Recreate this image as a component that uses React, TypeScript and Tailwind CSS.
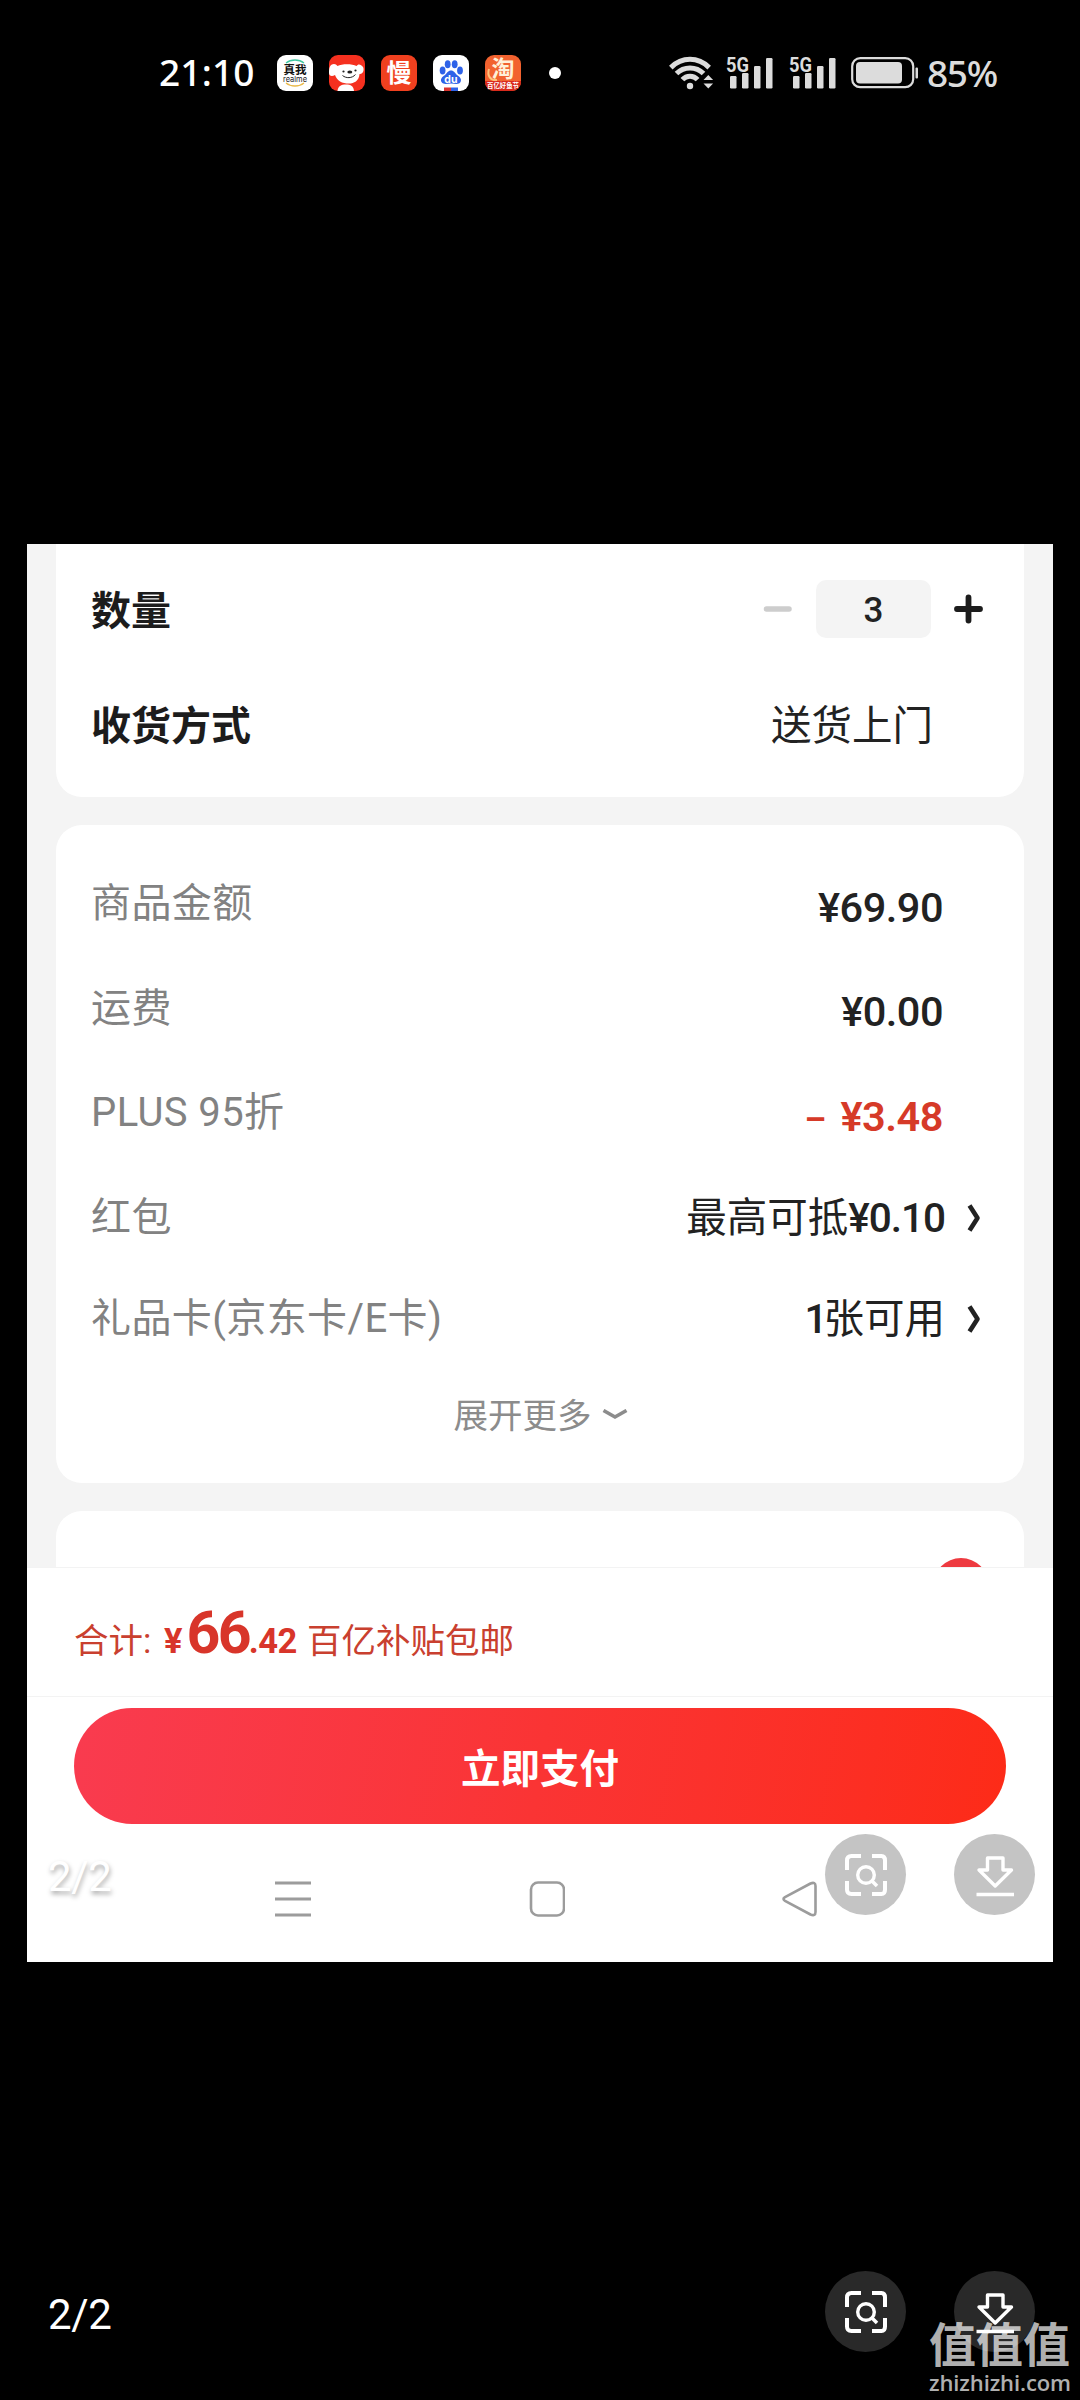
import React from "react";
import clsx from "clsx";

type PriceRow = {
  label: string;
  value: React.ReactNode;
  discount?: boolean;
  link?: boolean;
  short?: boolean;
};

const rows: PriceRow[] = [
  { label: "商品金额", value: "¥69.90" },
  { label: "运费", value: "¥0.00" },
  {
    label: "PLUS 95折",
    value: (
      <>
        <span className="mr-[15px] inline-block text-[34px] font-bold">–</span>¥3.48
      </>
    ),
    discount: true,
  },
  {
    label: "红包",
    value: (
      <>
        最高可抵<span className="font-medium tracking-[-1px]">¥0.10</span>
      </>
    ),
    link: true,
  },
  {
    label: "礼品卡(京东卡/E卡)",
    value: (
      <>
        <span className="font-medium tracking-[-4px]">1</span>张可用
      </>
    ),
    link: true,
    short: true,
  },
];

function SignalBars() {
  return (
    <svg className="overflow-visible" width="48" height="34" viewBox="0 0 48 34" fill="#dcdcdc">
      <text
        x="0"
        y="16"
        fontSize="20"
        fontWeight="700"
        textLength="23"
        lengthAdjust="spacingAndGlyphs"
        fontFamily="Roboto, sans-serif"
      >
        5G
      </text>
      <rect x="4" y="20" width="6.5" height="12.5" rx="1.2" />
      <rect x="16" y="17" width="6.5" height="15.5" rx="1.2" />
      <rect x="28" y="10" width="6.5" height="22.5" rx="1.2" />
      <rect x="40" y="2" width="6.5" height="30.5" rx="1.2" />
    </svg>
  );
}

function WifiIcon() {
  return (
    <svg
      width="46"
      height="36"
      viewBox="0 0 46 36"
      fill="none"
      stroke="#dcdcdc"
      strokeWidth="5"
    >
      <path d="M1.8 12.6C13 1.6 29 1.6 40.2 12.6" />
      <path d="M7.5 18.6C15 11 27 11 34.5 18.6" />
      <path d="M13.4 24.6C17.5 20 24.5 20 28.6 24.6" />
      <circle cx="21" cy="31" r="3.2" fill="#dcdcdc" stroke="none" />
      <path d="M34.5 25l4.8-5 4.8 5zM34.5 28.6l4.8 5 4.8-5z" fill="#dcdcdc" stroke="none" />
    </svg>
  );
}

function AppIcons() {
  return (
    <div className="flex gap-4">
      <svg className="overflow-visible" width="36" height="36" viewBox="0 0 36 36">
        <rect width="36" height="36" rx="9" fill="#fff" />
        <path d="M9 8C14 4 22 4 27 8" fill="none" stroke="#3fc7a0" strokeWidth="1.3" />
        <path d="M9 28C14 32 22 32 27 28" fill="none" stroke="#e9b949" strokeWidth="1.3" />
        <text x="6.5" y="19" fontSize="11.5" fontWeight="700" fill="#111" fontFamily="'Noto Sans CJK SC', sans-serif">
          真我
        </text>
        <text x="6" y="26.5" fontSize="8" fill="#222" textLength="24" lengthAdjust="spacingAndGlyphs" fontFamily="Inter, sans-serif">
          realme
        </text>
      </svg>

      <svg width="36" height="36" viewBox="0 0 36 36">
        <rect width="36" height="36" rx="9" fill="#f5301f" />
        <path
          d="M2 10C5 8 7 9 8.5 11C13 8.5 23 8.5 27.5 11C29 8.5 32 9 34 12C35.5 15 34 19.5 30.5 19C30 26 25 28.5 20 28.5C13 28.5 8 26 6 20C3 22 0 21 0 18C0 15 0 12 2 10Z"
          fill="#fff"
        />
        <path d="M8.5 36C9 31 12 29.5 17 29.5C22 29.5 24.5 31 25 36Z" fill="#fff" />
        <circle cx="14.5" cy="16.5" r="1.1" fill="#222" />
        <circle cx="26.5" cy="15.5" r="1.1" fill="#222" />
        <ellipse cx="20.8" cy="17" rx="2.5" ry="1.5" fill="#222" />
        <path d="M13.5 20.5C17 23.5 23 23.5 26.5 19.5" fill="none" stroke="#222" strokeWidth="1" />
      </svg>

      <svg className="overflow-visible" width="36" height="36" viewBox="0 0 36 36">
        <rect width="36" height="36" rx="9" fill="#f0401f" />
        <text x="5.5" y="27" fontSize="25" fontWeight="700" fill="#fff" fontFamily="'Noto Sans CJK SC', sans-serif">
          慢
        </text>
      </svg>

      <svg width="36" height="36" viewBox="0 0 36 36">
        <rect width="36" height="36" rx="9" fill="#fff" />
        <g fill="#2e62e8">
          <ellipse cx="9.6" cy="15.5" rx="2.9" ry="4" />
          <ellipse cx="14.7" cy="9.2" rx="2.9" ry="4" />
          <ellipse cx="21.7" cy="9.2" rx="2.9" ry="4" />
          <ellipse cx="27" cy="15.5" rx="2.9" ry="4" />
          <path d="M18 15.5C21 15.5 22 18 24 20C27 22 29 24 27.5 27C26 30 22 28.6 18 28.6C14 28.6 10.5 30 8.5 27C7 24 9 22 12 20C14 18 15 15.5 18 15.5Z" />
          <rect x="18" y="32.5" width="7" height="3.5" />
        </g>
        <rect x="11" y="32.5" width="7" height="3.5" fill="#d9332e" />
        <text x="11.3" y="27.5" fontSize="10.5" fontWeight="700" fill="#fff" fontFamily="Inter, sans-serif">
          du
        </text>
      </svg>

      <svg className="overflow-visible" width="36" height="36" viewBox="0 0 36 36">
        <rect width="36" height="36" rx="9" fill="#f2622f" />
        <path d="M0 26h36v1a9 9 0 0 1-9 9H9a9 9 0 0 1-9-9z" fill="#d92a1c" />
        <path d="M4 14C2 20 5 26 12 25" fill="none" stroke="#ffc27a" strokeWidth="2" />
        <text x="6.5" y="22" fontSize="23" fontWeight="700" fill="#fff0d8" fontFamily="'Noto Sans CJK SC', sans-serif">
          淘
        </text>
        <text
          x="2"
          y="33"
          fontSize="7"
          fontWeight="700"
          fill="#fff"
          textLength="32"
          lengthAdjust="spacingAndGlyphs"
          fontFamily="'Noto Sans CJK SC', sans-serif"
        >
          百亿好鱼节
        </text>
      </svg>
    </div>
  );
}

function StatusBar() {
  return (
    <header className="flex h-[146px] shrink-0 items-center pl-[159px] text-white">
      <span className="w-[118px] pb-[3px] font-['Noto_Sans',sans-serif] text-[37px] font-medium tracking-[0.2px]">
        21:10
      </span>
      <AppIcons />
      <span className="ml-7 size-3 rounded-full bg-white" />
      <div className="ml-[108px] flex items-center">
        <WifiIcon />
        <span className="ml-[11px] flex gap-[15px]">
          <SignalBars />
          <SignalBars />
        </span>
        <svg className="ml-[14px]" width="68" height="32" viewBox="0 0 68 32">
          <rect x="1.2" y="1.2" width="61" height="29" rx="8" fill="none" stroke="#dcdcdc" strokeWidth="2.2" />
          <rect x="5" y="5" width="46" height="21.5" rx="4" fill="#dcdcdc" />
          <rect x="64.5" y="10.5" width="2.5" height="11" rx="1" fill="#dcdcdc" />
        </svg>
        <span className="ml-[8px] pb-px font-['Noto_Sans',sans-serif] text-[37px] font-medium tracking-[-1.3px] text-[#dcdcdc]">
          85%
        </span>
      </div>
    </header>
  );
}

function Chevron() {
  return (
    <svg width="16" height="30" viewBox="0 0 16 30" fill="none" stroke="#222" strokeWidth="4.6" strokeLinejoin="round">
      <path d="M3.5 2.5L11.5 15L3.5 27.5" />
    </svg>
  );
}

function SummaryRow({ label, value, discount, link, short }: PriceRow) {
  return (
    <div className={clsx("flex items-center justify-between", short ? "h-[98px]" : "h-[104.5px]")}>
      <span className="text-[40px] tracking-[0.4px] text-[#828282]">{label}</span>
      {link ? (
        <span className="flex items-center pr-[6px] text-[40.5px] text-[#222]">
          <span>{value}</span>
          <span className="ml-[21px]">
            <Chevron />
          </span>
        </span>
      ) : (
        <span
          className={clsx(
            "pt-[6px] pr-[45px] text-[41.5px] tracking-[-0.5px]",
            discount ? "font-semibold text-[#d63a28]" : "font-medium text-[#222]"
          )}
        >
          {value}
        </span>
      )}
    </div>
  );
}

// circular scan + download actions of the photo viewer
function ViewerActions({ dark }: { dark?: boolean }) {
  const circle = clsx(
    "flex size-[81px] items-center justify-center rounded-full",
    dark ? "bg-[#292929]" : "bg-[#c4c4c4]"
  );
  return (
    <div className="flex gap-12">
      <span className={circle}>
        <svg width="44" height="44" viewBox="0 0 44 44" fill="none" stroke="#fff" strokeWidth="4">
          <path d="M3 17V7.5Q3 3 7.5 3H17M28 3h9.5Q41 3 41 7.5V17M41 28v8.5Q41 41 37.5 41H28M17 41H7.5Q3 41 3 36.5V28" />
          <circle cx="22" cy="22" r="8.3" strokeWidth="3.4" />
          <path d="M27.5 27.5L33 33" strokeWidth="3.6" />
        </svg>
      </span>
      <span className={circle}>
        <svg width="44" height="44" viewBox="0 0 44 44" fill="none" stroke="#fff" strokeWidth="3.4" strokeLinejoin="round">
          <path d="M14.5 5H30V17H38.5L22.2 33L6 17H14.5Z" />
          <path d="M3.5 41.5h37.5" />
        </svg>
      </span>
    </div>
  );
}

function OrderShot() {
  return (
    <main className="relative mx-[27px] flex h-[1418px] shrink-0 flex-col bg-[#f4f4f4]">
      <section className="mx-[29px] flex h-[253px] shrink-0 flex-col rounded-b-[26px] bg-white pr-9 pl-[35px] pt-[8px]">
        <div className="flex h-[114px] items-center">
          <span className="flex-1 pt-[5px] text-[40px] font-bold text-[#1c1c1c]">数量</span>
          <svg width="30" height="30" viewBox="0 0 30 30" stroke="#cdcdcd" strokeWidth="5.5" strokeLinecap="round">
            <path d="M3.5 15h22.5" />
          </svg>
          <span className="mr-[22px] ml-[23px] flex h-[58px] w-[115px] items-center justify-center rounded-[10px] bg-[#f4f4f4] pt-[2px] text-[35px] font-medium text-[#222]">
            3
          </span>
          <svg
            className="mr-[4px]"
            width="31"
            height="30"
            viewBox="0 0 31 30"
            stroke="#1c1c1c"
            strokeWidth="5.8"
            strokeLinecap="round"
          >
            <path d="M4 15h23M15.5 3.5v23" />
          </svg>
        </div>
        <div className="flex h-[116px] items-center justify-between pt-[5px] pr-[55px]">
          <span className="text-[40px] font-bold text-[#1c1c1c]">收货方式</span>
          <span className="text-[40.5px] text-[#222]">送货上门</span>
        </div>
      </section>

      <section className="mx-[29px] mt-[28px] h-[658px] shrink-0 rounded-[26px] bg-white pt-[27px] pr-9 pl-[35px]">
        {rows.map((row) => (
          <SummaryRow key={row.label} {...row} />
        ))}
        <div className="flex h-[96px] items-center justify-center gap-[10px] pl-[2px] text-[34.5px] text-[#8c8c8c]">
          展开更多
          <svg width="26" height="14" viewBox="0 0 26 14" fill="none" stroke="#8c8c8c" strokeWidth="3.6">
            <path d="M1.5 1.5L13 8L24.5 1.5" />
          </svg>
        </div>
      </section>

      <section className="mx-[29px] mt-[28px] flex h-[56px] shrink-0 justify-end overflow-hidden rounded-t-[26px] bg-white pt-[47px] pr-[35px]">
        <span className="size-[56px] shrink-0 rounded-full bg-[#ee3a40]" />
      </section>

      <div className="flex h-[130px] shrink-0 items-center border-y border-[#f3f3f3] bg-white pl-[47px]">
        <p className="flex items-baseline text-[34.5px] leading-none text-[#c9402f]">
          <span className="w-[90px]">合计:</span>
          <span className="font-bold text-[#d8352a]">¥</span>
          <span className="ml-[4px] text-[59px] font-bold tracking-[-2.7px] text-[#d8352a]">66</span>
          <span className="font-bold tracking-[-0.5px] text-[#d8352a]">.42</span>
          <span className="ml-[10px]">百亿补贴包邮</span>
        </p>
      </div>

      <div className="flex flex-1 flex-col bg-white px-[47px] pt-[11px]">
        <button className="h-[116px] shrink-0 rounded-full bg-linear-100 from-[#f93b4f] via-[#fa3434] to-[#fd2b17] pt-[7px] text-[39.5px] font-bold text-white">
          立即支付
        </button>
        <div className="flex h-[138px] items-center pt-[12px] text-[#9c9c9c]">
          <svg className="ml-[201px]" width="36" height="36" viewBox="0 0 36 36" stroke="currentColor" strokeWidth="3">
            <path d="M0 2h36M0 18h36M0 34h36" />
          </svg>
          <svg className="ml-[218px]" width="36" height="36" viewBox="0 0 36 36" fill="none" stroke="currentColor" strokeWidth="2.6">
            <rect x="2" y="1.5" width="33" height="33" rx="7" />
          </svg>
          <svg
            className="ml-[217px]"
            width="36"
            height="36"
            viewBox="0 0 36 36"
            fill="none"
            stroke="currentColor"
            strokeWidth="2.6"
            strokeLinejoin="round"
          >
            <path d="M3 16.2Q0 18 3 19.8L28.5 33.5Q33.5 35.5 33.5 31V5Q33.5 0.5 28.5 2.5Z" />
          </svg>
        </div>
      </div>

      {/* viewer controls captured over the page */}
      <span className="absolute top-[1312px] left-[21px] text-[42px] tracking-[-0.3px] text-white [text-shadow:1px_3px_5px_rgba(0,0,0,0.35)]">
        2/2
      </span>
      <div className="absolute top-[1290px] right-[18px]">
        <ViewerActions />
      </div>
    </main>
  );
}

export default function App() {
  return (
    <div className="relative flex h-[2400px] w-[1080px] flex-col overflow-hidden bg-black font-['Roboto','Noto_Sans_CJK_SC',sans-serif] leading-none">
      <StatusBar />
      <div className="h-[398px] shrink-0" />
      <OrderShot />

      <footer className="mt-[309px] flex h-[81px] shrink-0 items-center justify-between pr-[45px] pl-[48px]">
        <span className="pt-[6px] text-[42px] tracking-[-0.3px] text-white">2/2</span>
        <ViewerActions dark />
      </footer>

      <div className="absolute right-[8px] bottom-[4px] flex w-[143px] flex-col text-white/70">
        <span className="font-['Noto_Sans_CJK_SC',sans-serif] text-[47px] leading-[52px] font-bold">值值值</span>
        <span className="font-['Open_Sans',sans-serif] text-[22px] leading-[28px] font-semibold tracking-[-0.1px]">
          zhizhizhi.com
        </span>
      </div>
    </div>
  );
}
